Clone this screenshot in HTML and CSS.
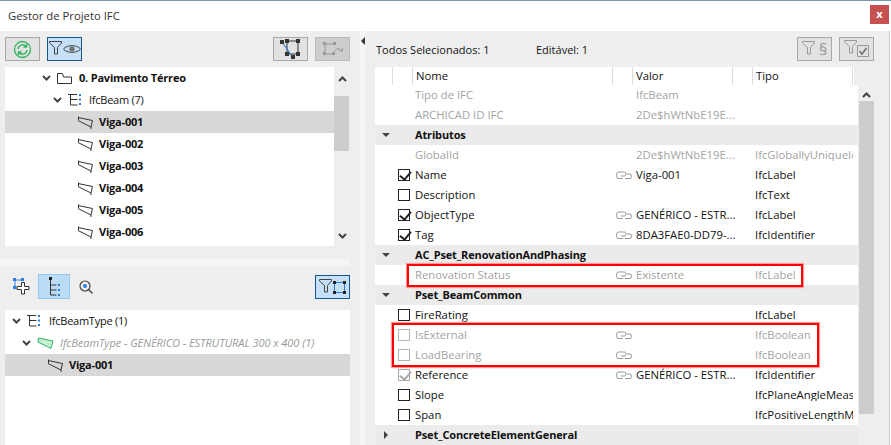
FILE: index.html
```html
<!DOCTYPE html>
<html lang="pt">
<head>
<meta charset="utf-8">
<title>Gestor de Projeto IFC</title>
<link rel="stylesheet" href="styles.css">
</head>
<body>
<svg class="defs" width="0" height="0">
  <symbol id="beam" viewBox="0 0 17 13"><path d="M1.500 .5v3.500M1 1.500l14.500 3-1.500 6.500L1 4.500M14 11v2" fill="none" stroke="#333" stroke-width="1"/></symbol>
  <symbol id="chev" viewBox="0 0 9 6"><path d="M1 1l3.500 3.500L8 1" fill="none" stroke="#444" stroke-width="2"/></symbol>
  <symbol id="link" viewBox="0 0 16 8"><path d="M7 7.500H2Q.5 7.500 .5 4.250T2 1H8.500Q10 1 10 3T8.500 5H5" fill="none" stroke="#999"/><path d="M11 3h3Q15.500 3 15.500 5.250T14 7.500H9" fill="none" stroke="#999"/></symbol>
  <symbol id="struct" viewBox="0 0 14 12"><path d="M0 .5h9M2.500 .5v10.500h7M2.500 5.500h7" fill="none" stroke="#333"/><path d="M11 0h2v2h-2zM11 4.500h2v2h-2zM11 9h2v2h-2z" fill="#2b7de0"/></symbol>
  <symbol id="funnel" viewBox="0 0 13 14"><path d="M.5 .5h12v1.500L8.500 6.500v6.500H5.500V6.500L.5 2z" fill="none" stroke="currentColor"/></symbol>
</svg>
<div class="win">
  <header class="title">
    <span>Gestor de Projeto IFC</span>
    <button class="close">x</button>
  </header>
  <main class="main">
    <section class="left">
      <div class="upper">
        <div class="bar">
          <div class="btn">
            <svg width="19" height="19" viewBox="0 0 19 19"><circle cx="9.500" cy="9.500" r="8" fill="none" stroke="#2fb35f" stroke-width="1.300"/><path d="M5 9a4.500 4.500 0 0 1 8-2.500M14 10a4.500 4.500 0 0 1-8 2.500M13.500 3.500v3.500h-3M5.500 15.500v-3.500h3" fill="none" stroke="#2fb35f" stroke-width="1.300"/></svg>
          </div>
          <div class="btn on">
            <svg class="ic-f" width="13" height="14"><use href="#funnel"/></svg>
            <svg width="18" height="10" viewBox="0 0 18 10"><path d="M.5 5C4 .5 14 .5 17.500 5 14 9.500 4 9.500 .5 5z" fill="none" stroke="#444"/><circle cx="9" cy="5" r="2.800" fill="#777"/></svg>
          </div>
          <div class="spring"></div>
          <div class="btn">
            <svg width="22" height="22" viewBox="0 0 22 22"><path d="M7 3h11v13H7z" fill="none" stroke="#333"/><path d="M2 4L12 18" stroke="#3a7fdc" stroke-width="1.200"/><path d="M0 2h4v4H0zM5 1h4v4H5zM16 1h4v4h-4zM5 14h4v4H5zM16 14h4v4h-4zM11 17h4v4h-4z" fill="#333"/></svg>
          </div>
          <div class="btn off">
            <svg width="22" height="14" viewBox="0 0 22 14"><path d="M3 2h10M3 2v10M3 12h8" fill="none" stroke="#999"/><path d="M1 0h3v3H1zM11 0h3v3h-3zM1 10h3v3H1zM10 10h3v3h-3z" fill="#999"/><path d="M13 9c1-3 5-3 7 0M20.500 6v3h-3" fill="none" stroke="#999"/></svg>
          </div>
        </div>
        <div class="pane">
          <div class="tree">
            <div class="row bold r-folder"><svg class="chev" width="9" height="6"><use href="#chev"/></svg><svg class="i-folder" width="15" height="11" viewBox="0 0 15 11"><path d="M.5 10.500V.5h5l1 3.500h8v6.500z" fill="none" stroke="#333"/></svg>0. Pavimento Térreo</div>
            <div class="row r-type"><svg class="chev" width="9" height="6"><use href="#chev"/></svg><svg class="i-struct" width="14" height="12"><use href="#struct"/></svg>IfcBeam (7)</div>
            <div class="row bold r-item sel"><svg class="i-beam" width="17" height="13"><use href="#beam"/></svg>Viga-001</div>
            <div class="row bold r-item"><svg class="i-beam" width="17" height="13"><use href="#beam"/></svg>Viga-002</div>
            <div class="row bold r-item"><svg class="i-beam" width="17" height="13"><use href="#beam"/></svg>Viga-003</div>
            <div class="row bold r-item"><svg class="i-beam" width="17" height="13"><use href="#beam"/></svg>Viga-004</div>
            <div class="row bold r-item"><svg class="i-beam" width="17" height="13"><use href="#beam"/></svg>Viga-005</div>
            <div class="row bold r-item"><svg class="i-beam" width="17" height="13"><use href="#beam"/></svg>Viga-006</div>
          </div>
          <div class="scroll scroll-l">
            <svg class="s-up" width="9" height="6"><use href="#chev"/></svg>
            <div class="thumb-l"></div>
            <svg class="s-down" width="9" height="6"><use href="#chev"/></svg>
          </div>
        </div>
      </div>
      <div class="hsplit"></div>
      <div class="bar2">
        <div class="tool">
          <svg width="17" height="17" viewBox="0 0 17 17"><path d="M2 2h8M2 2v8M2 10h3" fill="none" stroke="#3a7fdc"/><path d="M0 0h3v3H0zM8 0h3v3H8zM0 8h3v3H0z" fill="#2b7de0"/><path d="M8.500 4.500h3v4h4.500v3h-4.500v4.500h-3V11.500h-4.500v-3h4.500z" fill="#fff" stroke="#333"/></svg>
        </div>
        <div class="tool tool-on">
          <svg width="11" height="19" viewBox="0 0 11 19"><path d="M0 0h3v3H0z" fill="#222"/><path d="M1.500 3v15h6M1.500 8h6M1.500 13h6" fill="none" stroke="#333"/><path d="M9 7h2v2H9zM9 12h2v2H9zM9 17h2v2H9z" fill="#2b7de0"/></svg>
        </div>
        <div class="tool">
          <svg width="14" height="14" viewBox="0 0 14 14"><circle cx="6" cy="6" r="5" fill="none" stroke="#444" stroke-width="1.200"/><circle cx="6" cy="6" r="2" fill="#2b7de0"/><path d="M9.500 9.500L13.500 13.500" stroke="#444" stroke-width="1.400"/></svg>
        </div>
        <div class="spring"></div>
        <div class="btn on">
          <svg class="ic-f" width="13" height="14"><use href="#funnel"/></svg>
          <svg width="13" height="13" viewBox="0 0 13 13"><path d="M1.500 1.500h10v10h-10z" fill="none" stroke="#2b7de0"/><path d="M0 0h3v3H0zM10 0h3v3h-3zM0 10h3v3H0zM10 10h3v3h-3z" fill="#222"/></svg>
        </div>
      </div>
      <div class="tree tree2">
        <div class="row r2-type"><svg class="chev" width="9" height="6"><use href="#chev"/></svg><svg class="i-struct" width="14" height="12"><use href="#struct"/></svg>IfcBeamType (1)</div>
        <div class="row r2-sub"><svg class="chev" width="9" height="6"><use href="#chev"/></svg><svg class="i-beam2" width="17" height="13" viewBox="0 0 17 13"><path d="M1.500 1l14.500 3-2 7.500L1 5z" fill="#c4efd3" stroke="#2fb35f"/></svg><em>IfcBeamType - GENÉRICO - ESTRUTURAL 300 x 400 (1)</em></div>
        <div class="row bold r2-item sel"><svg class="i-beam" width="17" height="13"><use href="#beam"/></svg>Viga-001</div>
      </div>
    </section>
    <div class="vsplit"><span class="tri-l"></span></div>
    <section class="right">
      <div class="rbar">
        <span class="count">Todos Selecionados: 1</span>
        <span class="count">Editável: 1</span>
        <div class="spring"></div>
        <div class="btn dim">
          <svg class="ic-f" width="13" height="14"><use href="#funnel"/></svg>
          <span class="sect">§</span>
        </div>
        <div class="btn dim">
          <svg class="ic-f2" width="13" height="14"><use href="#funnel"/></svg>
          <svg class="ic-chk" width="12" height="12" viewBox="0 0 12 12"><path d="M.5 .5h11v11H.5z" fill="none" stroke="#999"/><path d="M2.500 6l2.500 3 4.500-6" fill="none" stroke="#777" stroke-width="1.800"/></svg>
        </div>
      </div>
      <div class="thead">
        <span></span><span></span><span class="th">Nome</span><span></span><span class="th">Valor</span><span></span><span class="th">Tipo</span>
      </div>
      <div class="tbody">
        <div class="rows">
          <div class="tr dis"><span class="c-name">Tipo de IFC</span><span class="c-val">IfcBeam</span></div>
          <div class="tr dis"><span class="c-name">ARCHICAD ID IFC</span><span class="c-val">2De$hWtNbE19E...</span></div>
          <div class="tr grp"><span class="tri-d"></span><span class="c-name">Atributos</span></div>
          <div class="tr dis"><span class="c-name">GlobalId</span><span class="c-val">2De$hWtNbE19E...</span><span class="c-type">IfcGloballyUniqueId</span></div>
          <div class="tr"><span class="cb ck"></span><span class="c-name">Name</span><svg class="c-link" width="16" height="8"><use href="#link"/></svg><span class="c-val">Viga-001</span><span class="c-type">IfcLabel</span></div>
          <div class="tr"><span class="cb"></span><span class="c-name">Description</span><span class="c-type">IfcText</span></div>
          <div class="tr"><span class="cb ck"></span><span class="c-name">ObjectType</span><svg class="c-link" width="16" height="8"><use href="#link"/></svg><span class="c-val">GENÉRICO - ESTR...</span><span class="c-type">IfcLabel</span></div>
          <div class="tr"><span class="cb ck"></span><span class="c-name">Tag</span><svg class="c-link" width="16" height="8"><use href="#link"/></svg><span class="c-val">8DA3FAE0-DD79-...</span><span class="c-type">IfcIdentifier</span></div>
          <div class="tr grp"><span class="tri-d"></span><span class="c-name">AC_Pset_RenovationAndPhasing</span></div>
          <div class="tr dis"><span class="c-name">Renovation Status</span><svg class="c-link" width="16" height="8"><use href="#link"/></svg><span class="c-val">Existente</span><span class="c-type">IfcLabel</span></div>
          <div class="tr grp"><span class="tri-d"></span><span class="c-name">Pset_BeamCommon</span></div>
          <div class="tr"><span class="cb"></span><span class="c-name">FireRating</span><span class="c-type">IfcLabel</span></div>
          <div class="tr dis"><span class="cb"></span><span class="c-name">IsExternal</span><svg class="c-link" width="16" height="8"><use href="#link"/></svg><span class="c-type">IfcBoolean</span></div>
          <div class="tr dis"><span class="cb"></span><span class="c-name">LoadBearing</span><svg class="c-link" width="16" height="8"><use href="#link"/></svg><span class="c-type">IfcBoolean</span></div>
          <div class="tr"><span class="cb ck ck-dis"></span><span class="c-name">Reference</span><svg class="c-link" width="16" height="8"><use href="#link"/></svg><span class="c-val">GENÉRICO - ESTR...</span><span class="c-type">IfcIdentifier</span></div>
          <div class="tr"><span class="cb"></span><span class="c-name">Slope</span><span class="c-type">IfcPlaneAngleMeasure</span></div>
          <div class="tr"><span class="cb"></span><span class="c-name">Span</span><span class="c-type">IfcPositiveLengthMeasure</span></div>
          <div class="tr grp"><span class="tri-r"></span><span class="c-name">Pset_ConcreteElementGeneral</span></div>
          <div class="mark mark-a"></div>
          <div class="mark mark-b"></div>
        </div>
        <div class="scroll scroll-r">
          <svg class="s-up" width="9" height="6"><use href="#chev"/></svg>
          <div class="thumb-r"></div>
        </div>
      </div>
    </section>
  </main>
</div>
</body>
</html>
```
FILE: styles.css
```css
* { box-sizing: border-box; }
html, body { margin: 0; height: 100%; }
body { font: 11px/1 "Open Sans", "Noto Sans", sans-serif; color: #111; overflow: hidden; background: #fff; }
.defs { position: absolute; }
.win { width: 891px; height: 445px; border-top: 1px solid #7b98b4; display: flex; flex-direction: column; }
.title { height: 30px; flex: none; display: flex; align-items: center; padding: 0 2px 0 8px; justify-content: space-between; font-size: 11.3px; color: #333; background: #fff; }
.close { width: 19px; height: 19px; margin-top: -3px; margin-right: 0; border: 0; padding: 0 0 3px; background: #c75050; color: #fff; font: 700 11px/1 "Open Sans", sans-serif; }
.main { flex: 1; min-height: 0; display: flex; width: 890px; border-right: 1px solid #ccc; background: #eee; }
.left { width: 360px; flex: none; display: flex; flex-direction: column; }
.upper { height: 228px; flex: none; padding: 0 10px 13px 5px; display: flex; flex-direction: column; }
.bar { height: 36px; flex: none; display: flex; gap: 7px; padding-top: 6px; }
.spring { flex: 1; }
.btn { width: 35px; height: 24px; flex: none; display: flex; align-items: center; justify-content: center; border: 1px solid #a9a9a9; background: #e2e2e2; color: #444; }
.on { background: #c6e0f7; border-color: #14568f; gap: 0; }
.off { background: #cdcdcd; border-color: #bbb; }
.dim { color: #999; gap: 0; }
.ic-f { margin-right: 1px; margin-top: -3px; }
.ic-f2 { margin-right: 0; margin-top: -4px; }
.ic-chk { margin-top: 3px; }
.sect { font-size: 17px; line-height: 20px; color: #999; margin-left: 3px; }
.pane { height: 179px; flex: none; display: flex; }
.tree { flex: 1; background: #fff; overflow: hidden; }
.row { height: 22px; display: flex; align-items: center; white-space: nowrap; letter-spacing: -.05px; line-height: 12px; }
.bold { font-weight: 700; letter-spacing: -.2px; }
.sel { background: #d8d8d8; }
.chev { flex: none; margin-right: 6px; }
.r-folder { padding-left: 37px; }
.r-type { padding-left: 48px; letter-spacing: -.25px; }
.r-item { padding-left: 72px; }
.i-folder { flex: none; margin-right: 7px; }
.i-struct { flex: none; margin-right: 7px; }
.i-beam { flex: none; margin-right: 5px; }
.i-beam2 { flex: none; margin-right: 6px; }
.scroll { width: 16px; flex: none; display: flex; flex-direction: column; align-items: center; }
.s-up { transform: rotate(180deg); margin-top: 9px; flex: none; }
.s-down { margin-top: auto; margin-bottom: 7px; flex: none; }
.thumb-l { width: 15px; height: 55px; margin-top: 14px; background: #cdcdcd; align-self: flex-start; }
.hsplit { height: 7px; flex: none; width: 350px; background: #f5f5f5; }
.bar2 { height: 44px; flex: none; width: 350px; padding: 8px 0 0 5px; display: flex; align-items: flex-start; }
.bar2 .btn { margin-top: 1px; }
.tool { width: 32px; height: 25px; display: flex; align-items: center; justify-content: center; border: 1px solid transparent; }
.tool-on { background: #bcdcf5; border-color: #94c9f4; margin-left: 1px; }
.tree2 { flex: 1; width: 345px; margin-left: 5px; }
.r2-type { padding-left: 7px; letter-spacing: -.25px; }
.r2-type .i-struct { margin-right: 8px; }
.r2-sub { padding-left: 17px; color: #9a9a9a; }
.r2-item { padding-left: 42px; }
.vsplit { width: 6px; flex: none; background: #f5f5f5; padding: 6px 0 0 1px; }
.tri-l { display: block; width: 0; border: 4px solid transparent; border-right: 4px solid #333; border-left: 0; }
.right { flex: 1; min-width: 0; display: flex; flex-direction: column; padding-left: 9px; }
.rbar { height: 36px; flex: none; padding: 6px 15px 6px 1px; display: flex; gap: 7px; align-items: center; }
.count { width: 153px; }
.count + .count { width: 80px; }
.thead { height: 18px; flex: none; width: 479px; background: #fff; display: grid; grid-template-columns: 18px 20px 200px 20px 100px 20px 100px; }
.thead span { border-right: 1px solid #ddd; }
.th { padding: 2px 0 0 3px; font-size: 11.3px; line-height: 14px; }
.tbody { flex: 1; min-height: 0; display: flex; }
.rows { width: 483px; flex: none; background: #fff; position: relative; overflow: hidden; font-size: 11.3px; }
.tr { height: 20px; display: grid; grid-template-columns: 18px 20px 202px 20px 118px 100px; align-items: center; white-space: nowrap; }
.tr > * { grid-row: 1; }
.cb { grid-column: 2; justify-self: start; margin-left: 5px; width: 12px; height: 12px; border: 1px solid #222; background: #fff; position: relative; }
.ck::after { content: ""; position: absolute; left: 3px; top: -1px; width: 5px; height: 9px; border: solid #222; border-width: 0 2.5px 2.5px 0; transform: rotate(40deg); }
.ck-dis { border-color: #aaa; }
.ck-dis::after { border-color: #aaa; }
.dis { color: #a3a3a3; }
.dis .cb { border-color: #b5b5b5; }
.c-name { grid-column: 3; padding-left: 2px; }
.c-link { grid-column: 4; margin-left: 1px; }
.c-val { grid-column: 5; padding-left: 1px; }
.c-type { grid-column: 6; padding-left: 2px; overflow: hidden; }
.grp { background: #ebebeb; font-weight: 700; font-size: 11px; letter-spacing: -.15px; line-height: 12px; }
.grp .c-name { grid-column: 3 / -1; }
.tri-d { grid-column: 1; justify-self: start; margin-left: 7px; width: 0; border: 4px solid transparent; border-top: 4px solid #444; border-bottom: 0; }
.tri-r { grid-column: 1; justify-self: start; margin-left: 9px; width: 0; border: 4px solid transparent; border-left: 4px solid #444; border-right: 0; }
.mark { position: absolute; border: 2px solid #f00; box-shadow: 0 0 1px 1px #ff9a9a; }
.mark-a { left: 32px; top: 179px; width: 396px; height: 23px; }
.mark-b { left: 17px; top: 238px; width: 427px; height: 44px; }
.scroll-r { width: 16px; background: #eee; }
.scroll-r .s-up { margin-top: 7px; }
.thumb-r { width: 15px; height: 313px; margin-top: 3px; background: #cdcdcd; align-self: flex-end; }
```
